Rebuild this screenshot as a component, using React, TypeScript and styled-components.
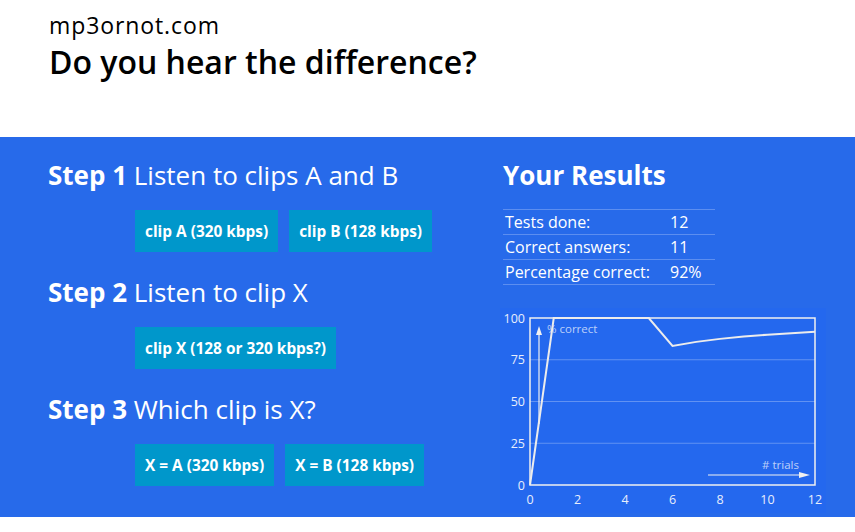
import React from 'react'
import styled, { createGlobalStyle } from 'styled-components'

const GlobalStyle = createGlobalStyle`
  body {
    margin: 0;
    background: #ffffff;
    font-family: 'Open Sans', 'Noto Sans', sans-serif;
    color: #000000;
  }
`

const Header = styled.header`
  height: 137px;
  box-sizing: border-box;
  padding: 11px 49px 0;
`

const SiteName = styled.div`
  font-size: 23px;
  line-height: 28px;
  font-weight: 500;
  letter-spacing: 0.9px;
`

const Title = styled.h1`
  margin: 3px 0 0;
  font-size: 32px;
  line-height: 40px;
  font-weight: 600;
`

const Band = styled.main`
  height: 380px;
  box-sizing: border-box;
  background: #276aea;
  color: #ffffff;
  display: flex;
  align-items: flex-start;
  padding: 20px 0 0 48px;
`

const Steps = styled.section`
  width: 455px;
  display: flex;
  flex-direction: column;
  gap: 22px;
`

const Step = styled.div`
  display: flex;
  flex-direction: column;
  gap: 17px;
`

const StepTitle = styled.h2`
  margin: 0;
  font-size: 26px;
  line-height: 36px;
  font-weight: 400;

  b {
    font-weight: 700;
  }
`

const ButtonRow = styled.div`
  display: flex;
  gap: 11px;
  padding-left: 87px;
`

const ClipButton = styled.button`
  height: 42px;
  padding: 0 10px;
  border: none;
  background: #0097cb;
  color: #ffffff;
  font-family: inherit;
  font-size: 15.4px;
  font-weight: 700;
  cursor: pointer;
`

const Results = styled.section`
  display: flex;
  flex-direction: column;
`

const ResultsTitle = styled.h2`
  margin: 0 0 16px;
  font-size: 26px;
  line-height: 36px;
  font-weight: 700;
`

const Table = styled.div`
  width: 212px;
  border-bottom: 1px solid #5c8ef0;
`

const Row = styled.div`
  display: grid;
  grid-template-columns: 165px 1fr;
  padding-left: 2px;
  border-top: 1px solid #5c8ef0;
  font-size: 16px;
  line-height: 24px;
`

const Chart = styled.svg`
  display: block;
  margin: 23px 0 0 -3px;
  background: #2468ee;
`

const data = [0, 100, 100, 100, 100, 100, 83.3, 85.7, 87.5, 88.9, 90, 90.9, 91.7]
const px = (i: number) => 30 + i * (285 / 12)
const py = (v: number) => 177 - v * 1.67

const ResultsChart = () => (
  <Chart width={326} height={205} viewBox="0 0 326 205">
    {[25, 50, 75].map((v) => (
      <line key={v} x1={30} x2={315} y1={py(v)} y2={py(v)} stroke="rgba(255,255,255,0.28)" strokeWidth={1} />
    ))}
    <rect x={30} y={10} width={285} height={167} fill="none" stroke="#f0f0f0" strokeWidth={1.5} />
    {[0, 25, 50, 75, 100].map((v) => (
      <text key={v} x={25} y={py(v) + 4.5} fill="#e8eefc" fontSize={12.5} textAnchor="end" fontFamily="Open Sans, sans-serif">
        {v}
      </text>
    ))}
    {[0, 2, 4, 6, 8, 10, 12].map((t) => (
      <text key={t} x={px(t)} y={196} fill="#e8eefc" fontSize={12.5} textAnchor="middle" fontFamily="Open Sans, sans-serif">
        {t}
      </text>
    ))}
    <line x1={39} x2={39} y1={116} y2={24} stroke="#f0f0f0" strokeWidth={1.2} />
    <polygon points="39,18 36,27 42,27" fill="#f0f0f0" />
    <text x={47} y={25} fill="rgba(255,255,255,0.7)" fontSize={11.5} fontFamily="Open Sans, sans-serif">
      % correct
    </text>
    <line x1={208} x2={302} y1={167} y2={167} stroke="#f0f0f0" strokeWidth={1.2} />
    <polygon points="310,167 299,164 299,170" fill="#f0f0f0" />
    <text x={299} y={161} fill="rgba(255,255,255,0.7)" fontSize={11.5} textAnchor="end" fontFamily="Open Sans, sans-serif">
      # trials
    </text>
    <polyline
      points={data.map((v, i) => `${px(i)},${py(v)}`).join(' ')}
      fill="none"
      stroke="#ececec"
      strokeWidth={2}
    />
  </Chart>
)

export default function App() {
  return (
    <>
      <GlobalStyle />
      <Header>
        <SiteName>mp3ornot.com</SiteName>
        <Title>Do you hear the difference?</Title>
      </Header>
      <Band>
        <Steps>
          <Step>
            <StepTitle>
              <b>Step 1</b> Listen to clips A and B
            </StepTitle>
            <ButtonRow>
              <ClipButton>clip A (320 kbps)</ClipButton>
              <ClipButton>clip B (128 kbps)</ClipButton>
            </ButtonRow>
          </Step>
          <Step>
            <StepTitle>
              <b>Step 2</b> Listen to clip X
            </StepTitle>
            <ButtonRow>
              <ClipButton>clip X (128 or 320 kbps?)</ClipButton>
            </ButtonRow>
          </Step>
          <Step>
            <StepTitle>
              <b>Step 3</b> Which clip is X?
            </StepTitle>
            <ButtonRow>
              <ClipButton>X = A (320 kbps)</ClipButton>
              <ClipButton>X = B (128 kbps)</ClipButton>
            </ButtonRow>
          </Step>
        </Steps>
        <Results>
          <ResultsTitle>Your Results</ResultsTitle>
          <Table>
            <Row>
              <span>Tests done:</span>
              <span>12</span>
            </Row>
            <Row>
              <span>Correct answers:</span>
              <span>11</span>
            </Row>
            <Row>
              <span>Percentage correct:</span>
              <span>92%</span>
            </Row>
          </Table>
          <ResultsChart />
        </Results>
      </Band>
    </>
  )
}
